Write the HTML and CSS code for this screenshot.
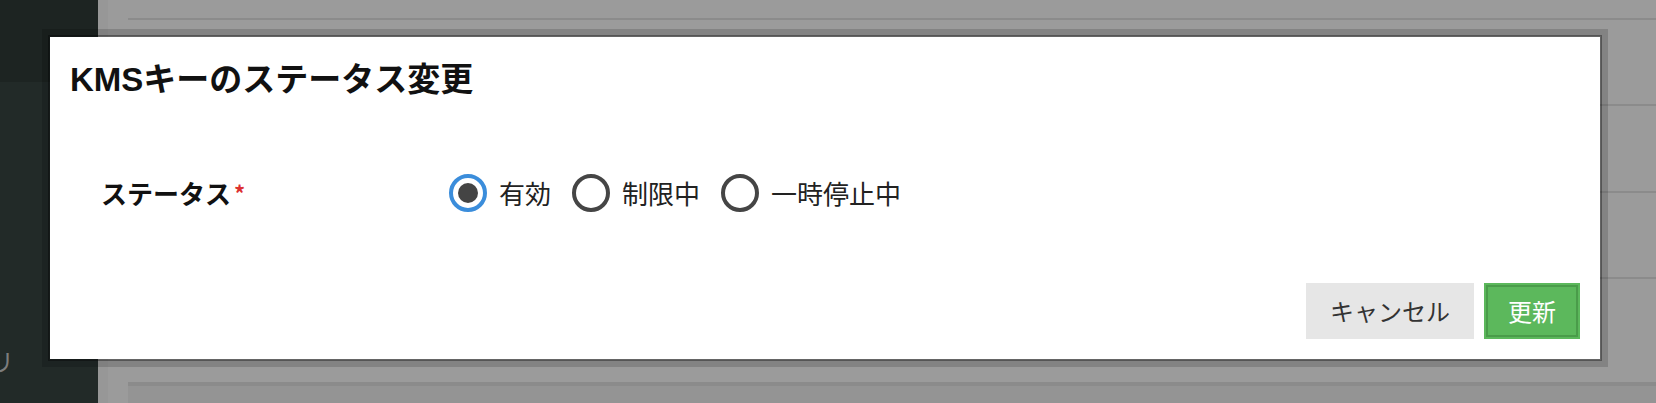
FILE: index.html
```html
<!DOCTYPE html>
<html lang="ja">
<head>
<meta charset="utf-8">
<title>KMSキーのステータス変更</title>
<link rel="stylesheet" href="styles.css">
</head>
<body>
<div class="page">
  <aside class="sidebar">
    <div class="sidebar-head"></div>
    <div class="sidebar-nav"><span class="nav-item">リ</span></div>
  </aside>
  <main class="main">
    <div class="panel">
      <div class="panel-row row-head"></div>
      <div class="panel-row row-a"></div>
      <div class="panel-row row-b"></div>
      <div class="panel-row row-c"></div>
    </div>
    <div class="panel-below"></div>
  </main>

  <div class="modal" role="dialog">
    <h2 class="modal-title">KMSキーのステータス変更</h2>
    <div class="form-row">
      <div class="form-label">ステータス<span class="required">*</span></div>
      <div class="radio-group">
        <label class="radio-option"><span class="radio checked"></span><span class="radio-text">有効</span></label>
        <label class="radio-option"><span class="radio"></span><span class="radio-text">制限中</span></label>
        <label class="radio-option"><span class="radio"></span><span class="radio-text">一時停止中</span></label>
      </div>
    </div>
    <div class="modal-footer">
      <button class="btn btn-cancel">キャンセル</button>
      <button class="btn btn-primary">更新</button>
    </div>
  </div>
</div>
</body>
</html>
```
FILE: styles.css
```css
* { box-sizing: border-box; }
html, body { margin: 0; padding: 0; }
body {
  width: 1656px;
  height: 403px;
  overflow: hidden;
  font-family: "Noto Sans CJK JP", "Noto Sans", sans-serif;
  background: #9b9b9b;
}
.page {
  position: relative;
  display: flex;
  width: 1656px;
  height: 403px;
}
.sidebar {
  width: 98px;
  flex: none;
  background: #222a28;
  overflow: hidden;
}
.sidebar-head {
  height: 82px;
  background: #1d2422;
}
.sidebar-nav {
  padding-top: 267px;
}
.nav-item {
  display: block;
  margin-left: -10px;
  font-size: 24px;
  line-height: 24px;
  color: #7d7d7d;
}
.main {
  flex: 1;
  display: flex;
  flex-direction: column;
  background: #9b9b9b;
  border-left: 10px solid #979797;
  padding-left: 20px;
  padding-top: 18px;
}
.panel {
  border-top: 2px solid #8b8b8b;
}
.panel-row {
  border-bottom: 2px solid #8b8b8b;
}
.row-head { height: 86px; }
.row-a { height: 87px; }
.row-b { height: 86px; }
.row-c { height: 107px; border-bottom-width: 4px; }
.panel-below {
  flex: 1;
  background: #949494;
}

.modal {
  position: absolute;
  left: 48px;
  top: 35px;
  width: 1554px;
  height: 326px;
  background: #fff;
  background-clip: padding-box;
  border: 2px solid rgba(0, 0, 0, 0.35);
  box-shadow: 0 0 0 6px rgba(0, 0, 0, 0.15);
  padding: 20px;
  display: flex;
  flex-direction: column;
}
.modal-title {
  margin: 0;
  font-family: "Liberation Sans", "Noto Sans CJK JP", sans-serif;
  font-size: 33px;
  font-weight: bold;
  line-height: 46px;
  color: #111;
}
.form-row {
  margin-top: 71px;
  height: 38px;
  padding-left: 31px;
  display: flex;
  align-items: center;
}
.form-label {
  width: 348px;
  flex: none;
  font-size: 26px;
  font-weight: bold;
  line-height: 38px;
  color: #111;
}
.required {
  display: inline-block;
  vertical-align: top;
  position: relative;
  top: 7px;
  margin-left: 3px;
  font-size: 22px;
  line-height: 22px;
  color: #dc3030;
}
.radio-group {
  display: flex;
  align-items: center;
  gap: 21px;
}
.radio-option {
  display: flex;
  align-items: center;
  gap: 12px;
  font-size: 26px;
  line-height: 38px;
  color: #222;
}
.radio {
  width: 38px;
  height: 38px;
  border-radius: 50%;
  border: 4px solid #454545;
  display: flex;
  align-items: center;
  justify-content: center;
}
.radio.checked {
  border-color: #3b8ddb;
}
.radio.checked::after {
  content: "";
  width: 20px;
  height: 20px;
  border-radius: 50%;
  background: #444;
}
.modal-footer {
  margin-top: auto;
  display: flex;
  justify-content: flex-end;
  gap: 10px;
}
.btn {
  height: 56px;
  padding: 0 24px;
  border: none;
  font-family: "Noto Sans CJK JP", sans-serif;
  font-size: 24px;
  line-height: 56px;
  cursor: pointer;
}
.btn-cancel {
  background: #e6e6e6;
  color: #333;
}
.btn-primary {
  background: #5cb85c;
  color: #fff;
  border: 2px solid #5cb85c;
  padding: 0 22px;
  line-height: 52px;
  box-shadow: inset 0 0 0 2px #4a9c4a;
}
```
